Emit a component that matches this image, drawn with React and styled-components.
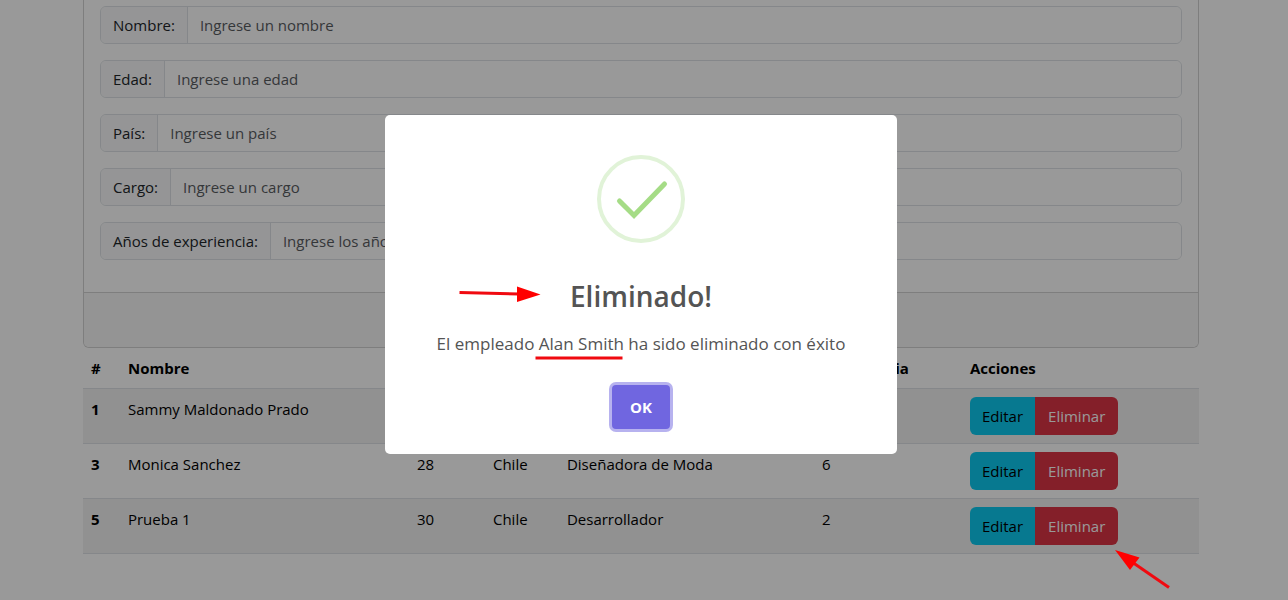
import React from "react";
import styled, { createGlobalStyle } from "styled-components";

const GlobalStyle = createGlobalStyle`
  *, *::before, *::after { box-sizing: border-box; }
  body {
    margin: 0;
    background: #fff;
    color: #212529;
    font: 400 15px/24px "Segoe UI", "Open Sans", "Noto Sans", sans-serif;
  }
`;

const Page = styled.main`
  min-height: 100vh;
  padding-right: 6px;
`;

const Container = styled.div`
  max-width: 1140px;
  margin: 0 auto;
  padding: 0 12px;
`;

const Card = styled.form`
  border: 1px solid #d2d2d2;
  border-top: 0;
  border-radius: 0 0 6px 6px;
  overflow: hidden;
`;

const CardBody = styled.div`
  display: flex;
  flex-direction: column;
  gap: 16px;
  padding: 6px 16px 32px;
`;

const CardFooter = styled.div`
  height: 55px;
  background: #f7f7f7;
  border-top: 1px solid #d2d2d2;
`;

const InputGroup = styled.div`
  display: flex;
  height: 38px;
  border: 1px solid #dee2e6;
  border-radius: 6px;
  overflow: hidden;
`;

const InputLabel = styled.label`
  padding: 6px 12px;
  background: #f8f9fa;
  border-right: 1px solid #dee2e6;
  white-space: nowrap;
`;

const Input = styled.input`
  flex: 1;
  min-width: 0;
  padding: 6px 12px;
  border: 0;
  background: #fff;
  color: inherit;
  font: inherit;
  &::placeholder { color: #595c5f; opacity: 1; }
`;

const Table = styled.table`
  width: 100%;
  table-layout: fixed;
  border-collapse: separate;
  border-spacing: 0;
  color: #000;
`;

const Col = styled.col`
  width: ${(p) => p.$width};
`;

const Cell = styled.td`
  padding: 8px;
  border-bottom: 1px solid #dee2e6;
  text-align: left;
  vertical-align: top;
  font-weight: ${(p) => (p.$strong ? 700 : 400)};
`;

const Row = styled.tr`
  &:nth-child(odd) { background: #f2f2f2; }
`;

const ButtonGroup = styled.div`
  display: inline-flex;
  vertical-align: top;
  border-radius: 6px;
  overflow: hidden;
`;

const ActionButton = styled.button`
  height: 38px;
  padding: 0 ${(p) => (p.$danger ? "13px" : "12px")};
  border: 0;
  font: inherit;
  color: ${(p) => (p.$danger ? "#fff" : "#000")};
  background: ${(p) => (p.$danger ? "#dc3545" : "#0dcaf0")};
`;

const Overlay = styled.div`
  position: fixed;
  inset: 0;
  display: flex;
  align-items: center;
  justify-content: center;
  padding: 0 6px 31px 0;
  background: rgba(0, 0, 0, 0.4);
`;

const Dialog = styled.section`
  display: flex;
  flex-direction: column;
  align-items: center;
  width: 512px;
  max-width: 100%;
  padding: 40px 0 22px;
  border-radius: 5px;
  background: #fff;
  color: #545454;
  text-align: center;
`;

const SuccessIcon = styled.svg`
  display: block;
  width: 88px;
  height: 88px;
`;

const Title = styled.h2`
  margin: 33px 0 0;
  font-size: 28px;
  line-height: 40px;
  font-weight: 600;
`;

const Message = styled.p`
  margin: 15px 0 0;
  font-size: 17px;
  line-height: 26px;
`;

const ConfirmButton = styled.button`
  height: 44px;
  margin: 28px 0 3px;
  padding: 0 18px;
  border: 0;
  border-radius: 4px;
  background: #7066e0;
  box-shadow: 0 0 0 3px rgba(112, 102, 224, 0.5);
  color: #fff;
  font: inherit;
  font-weight: 700;
`;

const Annotations = styled.svg`
  position: fixed;
  top: 0;
  left: 0;
  pointer-events: none;
`;

const fields = [
  { id: "nombre", label: "Nombre:", placeholder: "Ingrese un nombre" },
  { id: "edad", label: "Edad:", placeholder: "Ingrese una edad" },
  { id: "pais", label: "País:", placeholder: "Ingrese un país" },
  { id: "cargo", label: "Cargo:", placeholder: "Ingrese un cargo" },
  { id: "anios", label: "Años de experiencia:", placeholder: "Ingrese los años de experiencia" },
];

const columns = [
  { name: "#", width: "3.31%" },
  { name: "Nombre", width: "25.9%" },
  { name: "Edad", width: "6.81%" },
  { name: "País", width: "6.63%" },
  { name: "Cargo", width: "22.85%" },
  { name: "Experiencia", width: "13.26%" },
  { name: "Acciones", width: "21.24%" },
];

const employees = [
  { id: 1, data: ["Sammy Maldonado Prado", 25, "Chile", "Desarrollador", 5] },
  { id: 3, data: ["Monica Sanchez", 28, "Chile", "Diseñadora de Moda", 6] },
  { id: 5, data: ["Prueba 1", 30, "Chile", "Desarrollador", 2] },
];

export default function App() {
  return (
    <>
      <GlobalStyle />
      <Page>
        <Container>
          <Card>
            <CardBody>
              {fields.map((f) => (
                <InputGroup key={f.id}>
                  <InputLabel htmlFor={f.id}>{f.label}</InputLabel>
                  <Input id={f.id} placeholder={f.placeholder} />
                </InputGroup>
              ))}
            </CardBody>
            <CardFooter />
          </Card>
          <Table>
            <colgroup>
              {columns.map((c) => (
                <Col key={c.name} $width={c.width} />
              ))}
            </colgroup>
            <thead>
              <tr>
                {columns.map((c) => (
                  <Cell as="th" scope="col" key={c.name} $strong>{c.name}</Cell>
                ))}
              </tr>
            </thead>
            <tbody>
              {employees.map((e) => (
                <Row key={e.id}>
                  <Cell as="th" scope="row" $strong>{e.id}</Cell>
                  {e.data.map((value, i) => (
                    <Cell key={i}>{value}</Cell>
                  ))}
                  <Cell>
                    <ButtonGroup>
                      <ActionButton type="button">Editar</ActionButton>
                      <ActionButton type="button" $danger>Eliminar</ActionButton>
                    </ButtonGroup>
                  </Cell>
                </Row>
              ))}
            </tbody>
          </Table>
        </Container>
      </Page>
      <Overlay>
        <Dialog role="dialog" aria-modal="true" aria-labelledby="dialog-title">
          <SuccessIcon viewBox="0 0 88 88" fill="none" aria-hidden="true">
            <circle cx="44" cy="44" r="42" stroke="#e1f3d8" strokeWidth="4" />
            <path d="M22.500 46 37 60.500 67.500 29" stroke="#a5dc86" strokeWidth="5" strokeLinecap="round" />
          </SuccessIcon>
          <Title id="dialog-title">Eliminado!</Title>
          <Message>El empleado Alan Smith ha sido eliminado con éxito</Message>
          <ConfirmButton type="button">OK</ConfirmButton>
        </Dialog>
      </Overlay>
      <Annotations width="1288" height="600" viewBox="0 0 1288 600" aria-hidden="true">
        <g stroke="#f00a10" strokeWidth="3" fill="none">
          <path d="M459.500 292.500 519 294" />
          <path d="M535.500 358 622.500 358" />
          <path d="M1169 587.500 1132 562" />
        </g>
        <path d="M517 286.500 540.500 294.500 517 302z" fill="#f00" />
        <path d="M1115 550 1139.500 557.500 1130 570z" fill="#f00" />
      </Annotations>
    </>
  );
}
